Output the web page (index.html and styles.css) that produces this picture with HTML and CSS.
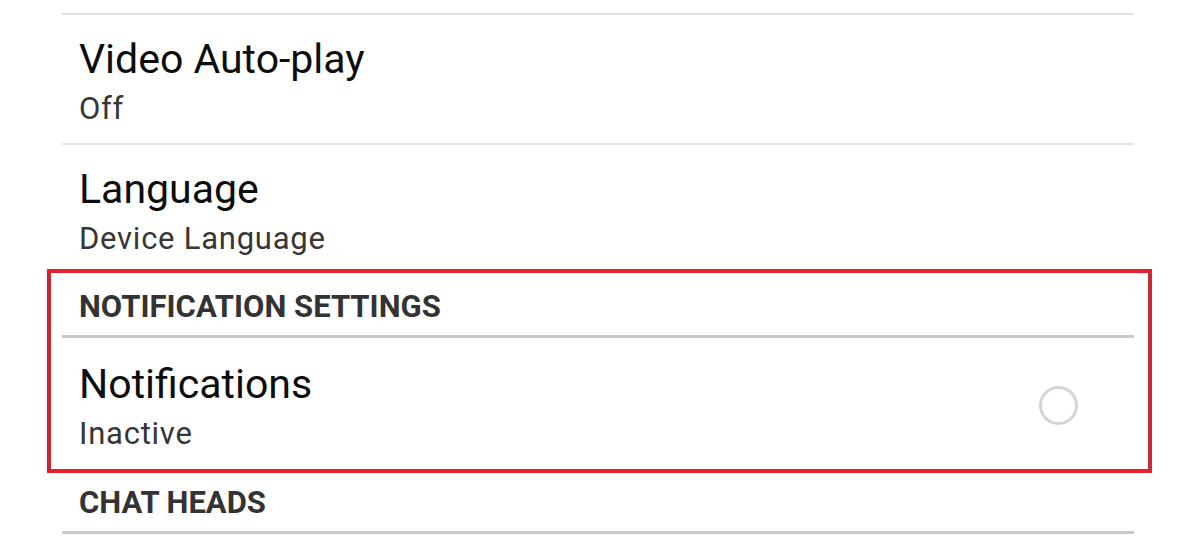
FILE: index.html
```html
<!DOCTYPE html>
<html lang="en">
<head>
<meta charset="utf-8">
<title>Settings</title>
<link rel="stylesheet" href="styles.css">
</head>
<body>
<div class="list">
  <div class="divider"></div>
  <div class="item">
    <div class="texts">
      <div class="title">Video Auto-play</div>
      <div class="subtitle">Off</div>
    </div>
  </div>
  <div class="divider"></div>
  <div class="item">
    <div class="texts">
      <div class="title">Language</div>
      <div class="subtitle">Device Language</div>
    </div>
  </div>
  <div class="group highlighted">
    <div class="header">NOTIFICATION SETTINGS</div>
    <div class="header-rule"></div>
    <div class="item item-toggle">
      <div class="texts">
        <div class="title">Notifications</div>
        <div class="subtitle">Inactive</div>
      </div>
      <span class="radio"></span>
    </div>
  </div>
  <div class="header">CHAT HEADS</div>
  <div class="header-rule"></div>
</div>
</body>
</html>
```
FILE: styles.css
```css
html, body {
  margin: 0;
  padding: 0;
  background: #ffffff;
}
body {
  font-family: Roboto, "Liberation Sans", sans-serif;
  overflow: hidden;
}
.list {
  margin-left: 62px;
  width: 1072px;
  padding-top: 13px;
}
.divider {
  height: 2px;
  background: #e2e2e2;
}
.item {
  display: flex;
  align-items: center;
  height: 128px;
  box-sizing: border-box;
  padding: 18.5px 56px 16.5px 17px;
}
.item-toggle {
  height: 131px;
  padding-top: 21.5px;
  padding-bottom: 17.5px;
}
.texts {
  flex: 1;
  display: flex;
  flex-direction: column;
  gap: 7px;
}
.title {
  font-size: 41px;
  line-height: 50px;
  color: #0d0d0d;
}
.subtitle {
  font-size: 31px;
  line-height: 36px;
  letter-spacing: 0.75px;
  color: #363636;
}
.header {
  height: 62px;
  box-sizing: border-box;
  padding: 15px 0 0 17px;
  font-size: 31px;
  line-height: 38px;
  font-weight: 700;
  color: #333333;
}
.header-rule {
  height: 3px;
  background: #c9c9c9;
}
.radio {
  width: 39px;
  height: 39px;
  box-sizing: border-box;
  border: 3px solid #d4d4d4;
  border-radius: 50%;
  flex: none;
}
.group {
  position: relative;
}
.highlighted::after {
  content: "";
  position: absolute;
  top: -4px;
  bottom: -4px;
  left: -15px;
  right: -18px;
  border: 4px solid #e8202a;
  border-left-color: #cc2636;
  border-right-color: #c82a38;
  pointer-events: none;
}
```
